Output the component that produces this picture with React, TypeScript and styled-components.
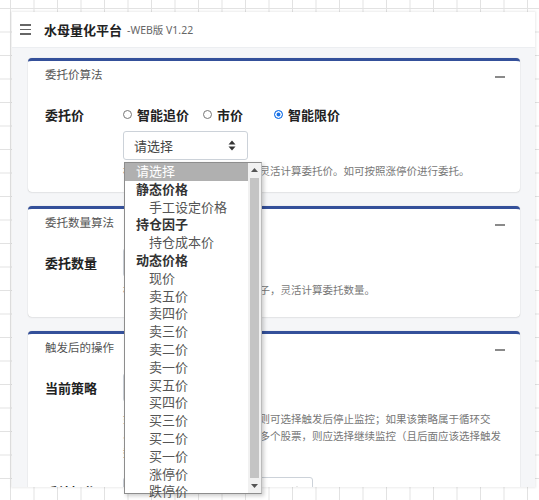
import React from "react";
import styled, { createGlobalStyle } from "styled-components";

const GlobalStyle = createGlobalStyle`
  body {
    margin: 0;
    font-family: "Noto Sans", "Noto Sans CJK SC", sans-serif;
  }
`;

type Opt = { text: string; kind: "placeholder" | "group" | "option" };

const priceOptions: Opt[] = [
  { text: "请选择", kind: "placeholder" },
  { text: "静态价格", kind: "group" },
  { text: "手工设定价格", kind: "option" },
  { text: "持仓因子", kind: "group" },
  { text: "持仓成本价", kind: "option" },
  { text: "动态价格", kind: "group" },
  ...["现价", "卖五价", "卖四价", "卖三价", "卖二价", "卖一价", "买五价", "买四价", "买三价", "买二价", "买一价", "涨停价", "跌停价"].map(
    (t) => ({ text: t, kind: "option" as const })
  ),
];

const Arrows = () => (
  <svg width="8" height="11" viewBox="0 0 8 11">
    <path d="M4 0.5 L7.5 4.5 L0.5 4.5 Z" fill="#333" />
    <path d="M4 10.5 L7.5 6.5 L0.5 6.5 Z" fill="#333" />
  </svg>
);

const App = () => {
  return (
    <Desk>
      <GlobalStyle />
      <Window>
        <Header>
          <Burger>
            <i />
            <i />
            <i />
          </Burger>
          <Title>水母量化平台</Title>
          <Version>-WEB版 V1.22</Version>
        </Header>

        <Main>
          <Card>
            <CardHeader>
              <CardTitle>委托价算法</CardTitle>
              <Minus />
            </CardHeader>
            <CardBody $bottom={12}>
              <Row>
                <Label>委托价</Label>
                <Radios>
                  <Radio>
                    <Dot />
                    智能追价
                  </Radio>
                  <Radio>
                    <Dot />
                    市价
                  </Radio>
                  <Radio>
                    <Dot $on />
                    智能限价
                  </Radio>
                </Radios>
              </Row>
              <Row $sub>
                <Label />
                <Select $w={125}>
                  <span>请选择</span>
                  <Arrows />
                </Select>
              </Row>
              <Help $gap={3}>根据价格、持仓等多种因子，灵活计算委托价。如可按照涨停价进行委托。</Help>
            </CardBody>
          </Card>

          <Card>
            <CardHeader>
              <CardTitle>委托数量算法</CardTitle>
              <Minus />
            </CardHeader>
            <CardBody $bottom={18}>
              <Row>
                <Label>委托数量</Label>
                <Select $w={125}>
                  <span>请选择</span>
                  <Arrows />
                </Select>
              </Row>
              <Help $gap={5}>根据可用资金、持仓等多种因子，灵活计算委托数量。</Help>
            </CardBody>
          </Card>

          <Card>
            <CardHeader>
              <CardTitle>触发后的操作</CardTitle>
              <Minus />
            </CardHeader>
            <CardBody $bottom={12}>
              <Row>
                <Label>当前策略</Label>
                <Select $w={125}>
                  <span>请选择</span>
                  <Arrows />
                </Select>
              </Row>
              <Help $gap={9}>
                如果该策略仅需要触发一次，则可选择触发后停止监控；如果该策略属于循环交
                <br />
                易策略，或该策略需同时监控多个股票，则应选择继续监控（且后面应该选择触发
                <br />
                数量）。
              </Help>
              <Row $top={15}>
                <Label>后续操作</Label>
                <Select $w={190}>
                  <span>继续监控</span>
                  <Arrows />
                </Select>
              </Row>
            </CardBody>
          </Card>
        </Main>
      </Window>

      <Dropdown>
        <List>
          {priceOptions.map((o) => (
            <Item key={o.text} $kind={o.kind}>
              {o.text}
            </Item>
          ))}
        </List>
        <Scroll>
          <ScrollBtn>
            <svg width="7" height="4" viewBox="0 0 7 4">
              <path d="M3.5 0 L7 4 L0 4 Z" fill="#555" />
            </svg>
          </ScrollBtn>
          <Thumb />
          <ScrollBtn>
            <svg width="7" height="4" viewBox="0 0 7 4">
              <path d="M3.5 4 L7 0 L0 0 Z" fill="#555" />
            </svg>
          </ScrollBtn>
        </Scroll>
      </Dropdown>
    </Desk>
  );
};

export default App;

const Desk = styled.div`
  position: relative;
  width: 539px;
  height: 500px;
  overflow: hidden;
  box-sizing: border-box;
  padding: 12px 4px 13px 12px;
  background-color: #fff;
  background-image: linear-gradient(to right, #e2e2e2 1px, transparent 1px),
    linear-gradient(to bottom, #e2e2e2 1px, transparent 1px);
  background-size: 23.5px 23.5px;
  background-position: 10px 8px;
`;

const Window = styled.div`
  width: 523px;
  height: 475px;
  display: flex;
  flex-direction: column;
  overflow: hidden;
  background: #f5f6f8;
  box-shadow: 0 0 2px 1px rgba(0, 0, 0, 0.08);
`;

const Header = styled.div`
  height: 36px;
  flex-shrink: 0;
  display: flex;
  align-items: center;
  padding: 0 0 0 8px;
  background: #fff;
  border-bottom: 1px solid #eceef1;
  box-sizing: border-box;
`;

const Burger = styled.div`
  width: 11px;
  display: flex;
  flex-direction: column;
  gap: 3px;
  margin-right: 13px;

  i {
    display: block;
    height: 1.5px;
    background: #666;
  }
`;

const Title = styled.span`
  font-size: 13px;
  font-weight: 700;
  color: #222;
  margin-right: 5px;
`;

const Version = styled.span`
  font-size: 10.5px;
  color: #666;
`;

const Main = styled.div`
  display: flex;
  flex-direction: column;
  gap: 14px;
  padding: 10px 15px 0 16px;
`;

const Card = styled.div`
  flex-shrink: 0;
  background: #fff;
  border-top: 3px solid #34509a;
  border-radius: 4px;
  box-shadow: 0 0 1px rgba(0, 0, 0, 0.25), 0 1px 2px rgba(0, 0, 0, 0.06);
`;

const CardHeader = styled.div`
  display: flex;
  justify-content: space-between;
  align-items: center;
  padding: 6px 15px 0 17px;
  height: 16px;
  box-sizing: content-box;
`;

const CardTitle = styled.span`
  font-size: 11.5px;
  line-height: 16px;
  color: #555;
`;

const Minus = styled.span`
  width: 10px;
  height: 2px;
  background: #8a8a8a;
  margin-top: 3px;
`;

const CardBody = styled.div<{ $bottom: number }>`
  padding: 17px 17px ${(p) => p.$bottom}px 17px;
`;

const Row = styled.div<{ $sub?: boolean; $top?: number }>`
  display: grid;
  grid-template-columns: 78px 1fr;
  align-items: center;
  min-height: 29px;
  margin-top: ${(p) => (p.$sub ? 2 : p.$top ?? 0)}px;
`;

const Label = styled.span`
  font-size: 13px;
  font-weight: 700;
  color: #222;
`;

const Radios = styled.div`
  display: grid;
  grid-template-columns: 80px 71px auto;
`;

const Radio = styled.label`
  display: flex;
  align-items: center;
  gap: 5px;
  font-size: 13px;
  font-weight: 700;
  color: #222;
`;

const Dot = styled.span<{ $on?: boolean }>`
  width: 9px;
  height: 9px;
  border-radius: 50%;
  box-sizing: border-box;
  border: 1px solid ${(p) => (p.$on ? "#1a73e8" : "#777")};
  background: ${(p) => (p.$on ? "#1a73e8" : "#fff")};
  box-shadow: ${(p) => (p.$on ? "inset 0 0 0 1.5px #fff" : "none")};
`;

const Select = styled.div<{ $w: number }>`
  width: ${(p) => p.$w}px;
  height: 29px;
  box-sizing: border-box;
  display: flex;
  align-items: center;
  justify-content: space-between;
  padding: 0 11px 0 10px;
  border: 1px solid #ccd2d9;
  border-radius: 3px;
  background: #fff;
  font-size: 13px;
  color: #444;
`;

const Help = styled.p<{ $gap: number }>`
  margin: ${(p) => p.$gap}px 0 0 78px;
  white-space: nowrap;
  font-size: 10.5px;
  line-height: 17px;
  color: #777;
`;

const Dropdown = styled.div`
  position: absolute;
  left: 124px;
  top: 162px;
  width: 138px;
  height: 332px;
  display: flex;
  background: #fff;
  border: 1px solid #8d8d8d;
  border-right-color: #bbb;
  box-sizing: border-box;
  box-shadow: 2px 2px 4px rgba(0, 0, 0, 0.2);
`;

const List = styled.div`
  flex: 1;
  display: flex;
  flex-direction: column;
`;

const Item = styled.div<{ $kind: Opt["kind"] }>`
  height: 17.8px;
  line-height: 17.8px;
  font-size: 13px;
  white-space: nowrap;
  padding-left: ${(p) => (p.$kind === "option" ? 24 : 11)}px;
  font-weight: ${(p) => (p.$kind === "group" ? 700 : 400)};
  color: ${(p) => (p.$kind === "placeholder" ? "#fff" : p.$kind === "group" ? "#333" : "#555")};
  background: ${(p) => (p.$kind === "placeholder" ? "#b0b0b0" : "transparent")};
`;

const Scroll = styled.div`
  width: 13px;
  display: flex;
  flex-direction: column;
  align-items: center;
  background: #f1f1f1;
`;

const ScrollBtn = styled.div`
  height: 14px;
  display: flex;
  align-items: center;
  justify-content: center;
`;

const Thumb = styled.div`
  flex: 1;
  width: 9px;
  background: #c4c4c4;
  margin: 1px 0;
`;
